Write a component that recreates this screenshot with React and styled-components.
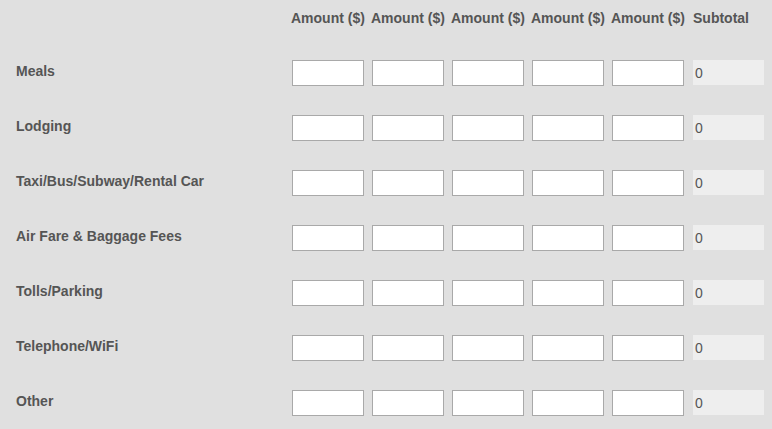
import React from 'react'
import styled, { createGlobalStyle } from 'styled-components'

const GlobalStyle = createGlobalStyle`
  html, body {
    margin: 0;
    padding: 0;
    background: #e0e0e0;
  }
  body {
    font-family: "Liberation Sans", Arial, sans-serif;
    color: #555;
  }
`

const Sheet = styled.div`
  display: flex;
  flex-direction: column;
  gap: 29px;
  padding: 10px 0 0 16px;
  width: 772px;
  height: 429px;
  box-sizing: border-box;
  overflow: hidden;
`

const Row = styled.div`
  display: grid;
  grid-template-columns: 268px repeat(5, 72px) 72px;
  column-gap: 8px;
  align-items: start;
  margin-bottom: ${p => (p.$head ? '5px' : '0')};
`

const Heading = styled.div`
  font-size: 14px;
  font-weight: bold;
  line-height: 16px;
  white-space: nowrap;
  margin-left: ${p => (p.$sub ? '1px' : '-1px')};
`

const Label = styled.div`
  font-size: 14px;
  font-weight: bold;
  line-height: 16px;
  margin-top: 3px;
  white-space: nowrap;
`

const Amount = styled.input`
  display: block;
  width: 72px;
  height: 26px;
  box-sizing: border-box;
  margin: 0;
  border: 1px solid #a9a9a9;
  background: #fff;
  font: 14px "Liberation Sans", Arial, sans-serif;
  outline: none;
`

const Subtotal = styled.div`
  width: 71px;
  height: 25px;
  margin-left: 1px;
  box-sizing: border-box;
  padding-left: 2px;
  background: #eeeeee;
  font-size: 14px;
  line-height: 26px;
  color: #555;
`

const categories = [
  'Meals',
  'Lodging',
  'Taxi/Bus/Subway/Rental Car',
  'Air Fare & Baggage Fees',
  'Tolls/Parking',
  'Telephone/WiFi',
  'Other',
]

const cols = [0, 1, 2, 3, 4]

export default function App() {
  return (
    <>
      <GlobalStyle />
      <Sheet>
        <Row $head>
          <div />
          {cols.map(i => (
            <Heading key={i}>Amount ($)</Heading>
          ))}
          <Heading $sub>Subtotal</Heading>
        </Row>
        {categories.map(name => (
          <Row key={name}>
            <Label>{name}</Label>
            {cols.map(i => (
              <Amount key={i} type="text" aria-label={`${name} amount ${i + 1}`} />
            ))}
            <Subtotal>0</Subtotal>
          </Row>
        ))}
      </Sheet>
    </>
  )
}
